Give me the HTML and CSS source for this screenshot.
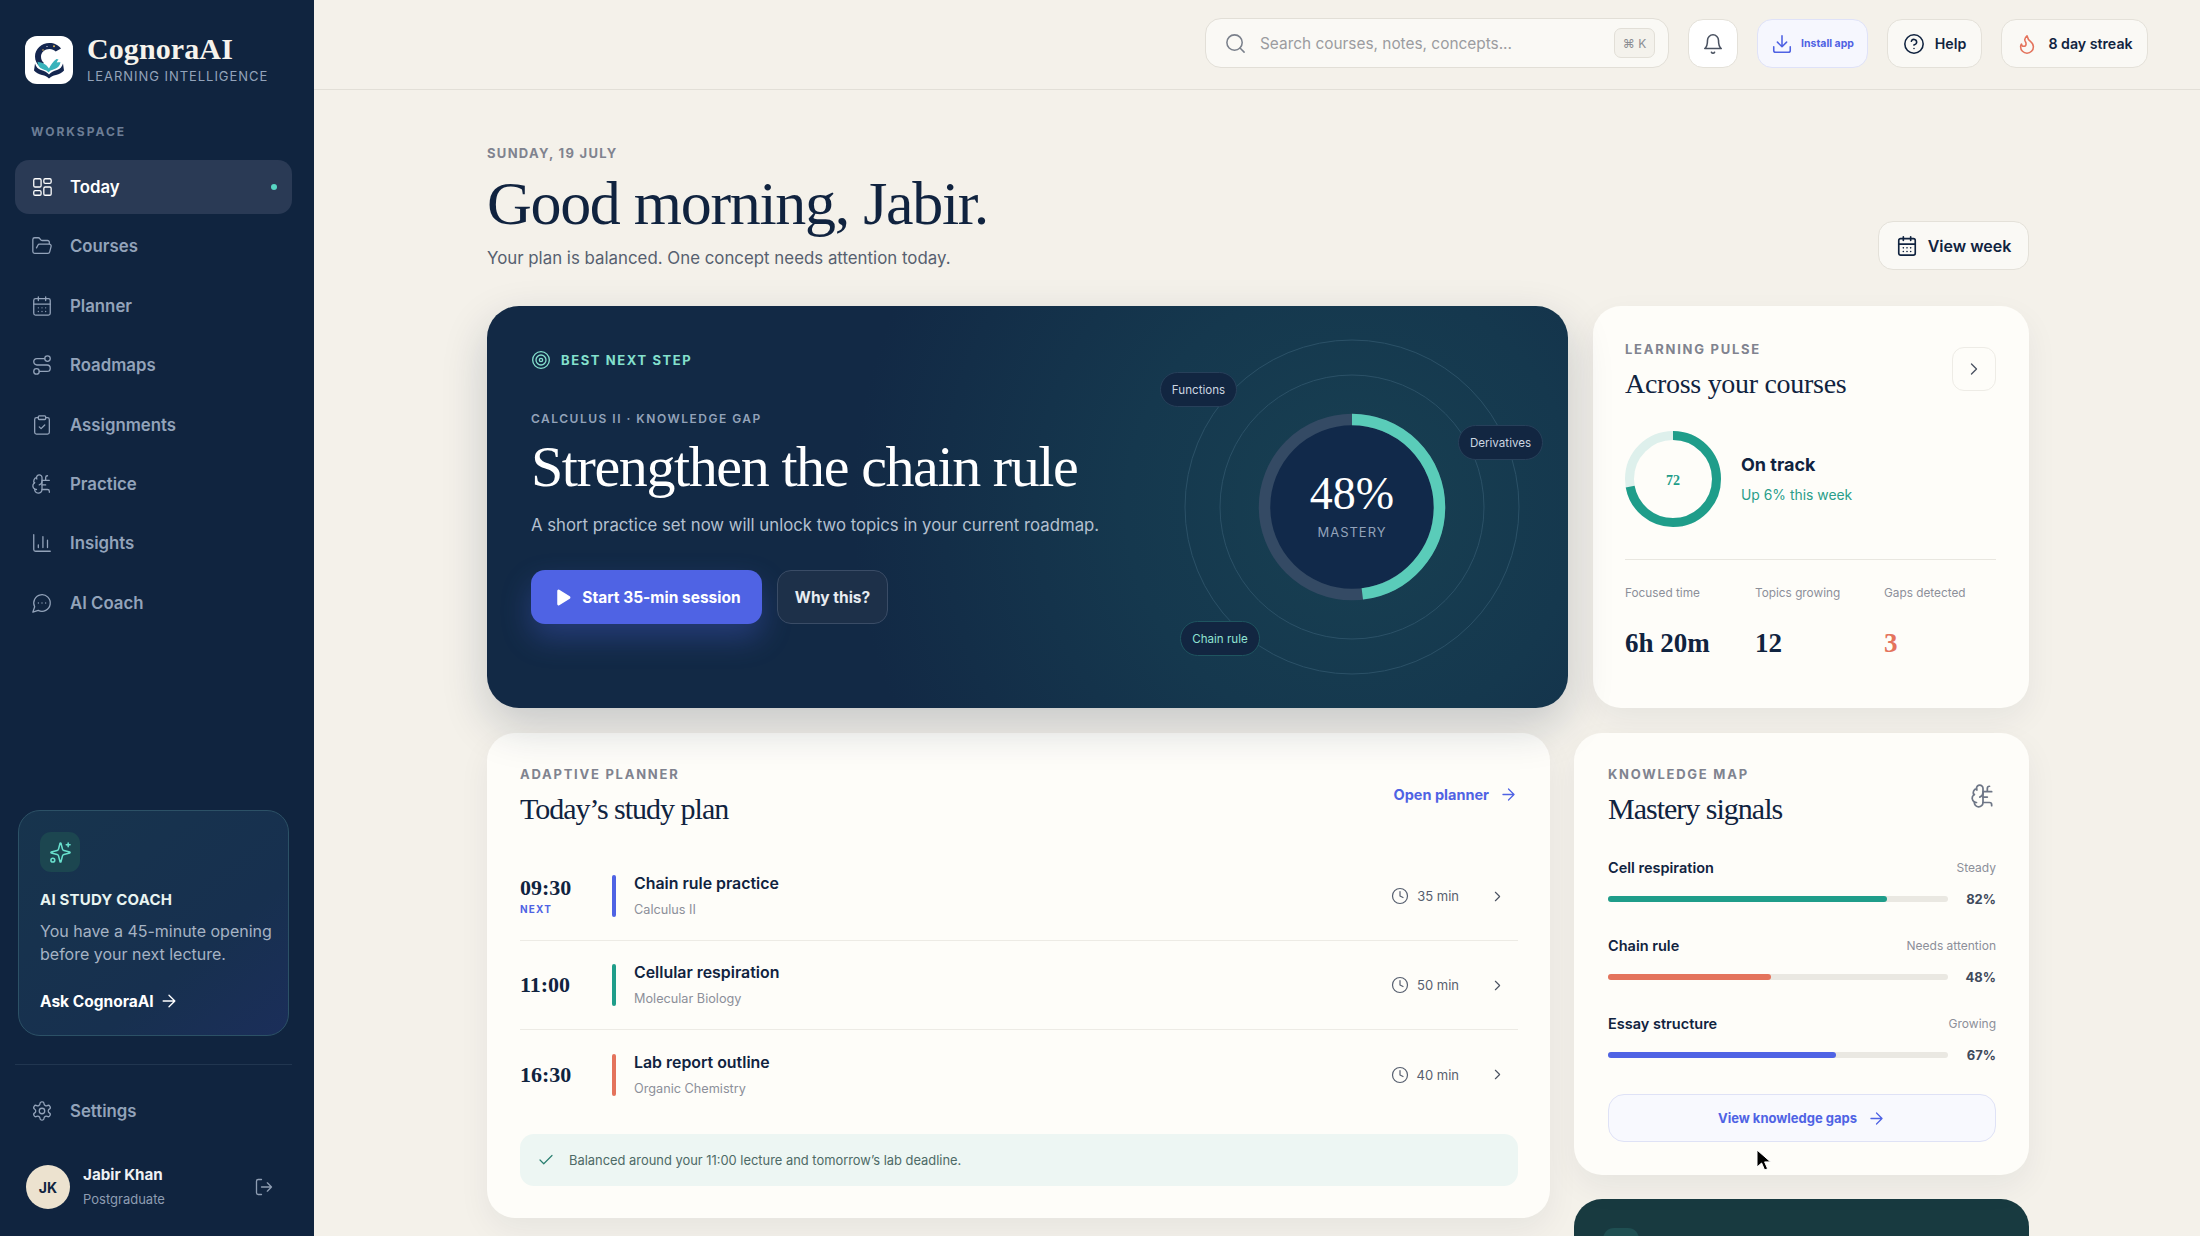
FILE: index.html
```html
<!DOCTYPE html>
<html lang="en">
  <head>
    <meta charset="UTF-8" />
    <meta name="viewport" content="width=device-width, initial-scale=1.0" />
    <title>CognoraAI</title>
    <link rel="stylesheet" href="styles.css">
  </head>
  <body>
    <svg class="icon-defs" aria-hidden="true">
      <symbol id="i-grid" viewBox="0 0 24 24"><rect x="3" y="3" width="8" height="9" rx="1.5"/><rect x="14" y="3" width="8" height="5" rx="1.5"/><rect x="14" y="12" width="8" height="9" rx="1.5"/><rect x="3" y="16" width="8" height="5" rx="1.5"/></symbol>
      <symbol id="i-folder" viewBox="0 0 24 24"><path d="m6 14 1.5-2.9A2 2 0 0 1 9.24 10H20a2 2 0 0 1 1.94 2.5l-1.54 6a2 2 0 0 1-1.95 1.5H4a2 2 0 0 1-2-2V5a2 2 0 0 1 2-2h3.9a2 2 0 0 1 1.69.9l.81 1.2a2 2 0 0 0 1.67.9H18a2 2 0 0 1 2 2v2"/></symbol>
      <symbol id="i-calendar" viewBox="0 0 24 24"><rect x="3" y="4" width="18" height="18" rx="2"/><path d="M16 2v4M8 2v4M3 10h18M8 14h.01M12 14h.01M16 14h.01M8 18h.01M12 18h.01M16 18h.01"/></symbol>
      <symbol id="i-route" viewBox="0 0 24 24"><circle cx="6" cy="19" r="3"/><path d="M9 19h8.5a3.5 3.5 0 0 0 0-7h-11a3.5 3.5 0 0 1 0-7H15"/><circle cx="18" cy="5" r="3"/></symbol>
      <symbol id="i-clipboard" viewBox="0 0 24 24"><rect x="8" y="2" width="8" height="4" rx="1"/><path d="M16 4h2a2 2 0 0 1 2 2v14a2 2 0 0 1-2 2H6a2 2 0 0 1-2-2V6a2 2 0 0 1 2-2h2"/><path d="m9 14 2 2 4-4"/></symbol>
      <symbol id="i-brain" viewBox="0 0 24 24"><path d="M12 5a3 3 0 1 0-5.997.125 4 4 0 0 0-2.526 5.77 4 4 0 0 0 .556 6.588A4 4 0 1 0 12 18Z"/><path d="M9 13a4.5 4.5 0 0 0 3-4M6.003 5.125A3 3 0 0 0 6.401 6.5M3.477 10.896a4 4 0 0 1 .585-.396M6 18a4 4 0 0 1-1.967-.516"/><path d="M12 13h4M12 18h6a2 2 0 0 1 2 2v1M12 8h8M16 8V5a2 2 0 0 1 2-2"/></symbol>
      <symbol id="i-chart" viewBox="0 0 24 24"><path d="M3 3v16a2 2 0 0 0 2 2h16M18 17V9M13 17V5M8 17v-3"/></symbol>
      <symbol id="i-chat" viewBox="0 0 24 24"><path d="M7.9 20A9 9 0 1 0 4 16.1L2 22Z"/><path d="M8 12h.01M12 12h.01M16 12h.01"/></symbol>
      <symbol id="i-settings" viewBox="0 0 24 24"><path d="M12.22 2h-.44a2 2 0 0 0-2 2v.18a2 2 0 0 1-1 1.73l-.43.25a2 2 0 0 1-2 0l-.15-.08a2 2 0 0 0-2.73.73l-.22.38a2 2 0 0 0 .73 2.73l.15.1a2 2 0 0 1 1 1.72v.51a2 2 0 0 1-1 1.74l-.15.09a2 2 0 0 0-.73 2.73l.22.38a2 2 0 0 0 2.73.73l.15-.08a2 2 0 0 1 2 0l.43.25a2 2 0 0 1 1 1.73V20a2 2 0 0 0 2 2h.44a2 2 0 0 0 2-2v-.18a2 2 0 0 1 1-1.73l.43-.25a2 2 0 0 1 2 0l.15.08a2 2 0 0 0 2.73-.73l.22-.39a2 2 0 0 0-.73-2.73l-.15-.08a2 2 0 0 1-1-1.74v-.5a2 2 0 0 1 1-1.74l.15-.09a2 2 0 0 0 .73-2.73l-.22-.38a2 2 0 0 0-2.73-.73l-.15.08a2 2 0 0 1-2 0l-.43-.25a2 2 0 0 1-1-1.73V4a2 2 0 0 0-2-2z"/><circle cx="12" cy="12" r="3"/></symbol>
      <symbol id="i-logout" viewBox="0 0 24 24"><path d="M9 21H5a2 2 0 0 1-2-2V5a2 2 0 0 1 2-2h4M16 17l5-5-5-5M21 12H9"/></symbol>
      <symbol id="i-sparkle" viewBox="0 0 24 24"><path d="M9.937 15.5A2 2 0 0 0 8.5 14.063l-6.135-1.582a.5.5 0 0 1 0-.962L8.5 9.936A2 2 0 0 0 9.937 8.5l1.582-6.135a.5.5 0 0 1 .963 0L14.063 8.5A2 2 0 0 0 15.5 9.937l6.135 1.581a.5.5 0 0 1 0 .964L15.5 14.063a2 2 0 0 0-1.437 1.437l-1.582 6.135a.5.5 0 0 1-.963 0z"/><path d="M20 2v4M22 4h-4"/><circle cx="4" cy="20" r="2"/></symbol>
      <symbol id="i-arrow" viewBox="0 0 24 24"><path d="M5 12h14M12 5l7 7-7 7"/></symbol>
      <symbol id="i-chevron" viewBox="0 0 24 24"><path d="m9 18 6-6-6-6"/></symbol>
      <symbol id="i-clock" viewBox="0 0 24 24"><circle cx="12" cy="12" r="10"/><path d="M12 6v6l4 2"/></symbol>
      <symbol id="i-search" viewBox="0 0 24 24"><circle cx="11" cy="11" r="8"/><path d="m21 21-4.3-4.3"/></symbol>
      <symbol id="i-bell" viewBox="0 0 24 24"><path d="M6 8a6 6 0 0 1 12 0c0 7 3 9 3 9H3s3-2 3-9M10.3 21a1.94 1.94 0 0 0 3.4 0"/></symbol>
      <symbol id="i-download" viewBox="0 0 24 24"><path d="M21 15v4a2 2 0 0 1-2 2H5a2 2 0 0 1-2-2v-4M7 10l5 5 5-5M12 15V3"/></symbol>
      <symbol id="i-help" viewBox="0 0 24 24"><circle cx="12" cy="12" r="10"/><path d="M9.09 9a3 3 0 0 1 5.83 1c0 2-3 3-3 3M12 17h.01"/></symbol>
      <symbol id="i-flame" viewBox="0 0 24 24"><path d="M8.5 14.5A2.5 2.5 0 0 0 11 12c0-1.38-.5-2-1-3-1.072-2.143-.224-4.054 2-6 .5 2.5 2 4.9 4 6.5 2 1.6 3 3.5 3 5.5a7 7 0 1 1-14 0c0-1.153.433-2.294 1-3a2.5 2.5 0 0 0 2.5 2.5z"/></symbol>
      <symbol id="i-target" viewBox="0 0 24 24"><circle cx="12" cy="12" r="10"/><circle cx="12" cy="12" r="6"/><circle cx="12" cy="12" r="2"/></symbol>
      <symbol id="i-check" viewBox="0 0 24 24"><path d="M20 6 9 17l-5-5"/></symbol>
    </svg>

    <div class="app">
      <aside class="sidebar">
        <div class="brand">
          <div class="brand-logo">
            <svg width="38" height="38" viewBox="0 0 38 38">
              <path d="M31 7.500C28.500 4 24 2 19.500 2 11.500 2 5 8.300 5 15.500c0 4 1.800 7.500 4.800 10L14 22c-2-1.500-3-3.800-3-6.300C11 11.300 14.800 8 19.500 8c2.500 0 4.600.9 6.200 2.500Z" fill="#14264f"/>
              <path d="M5 22.500c1 3.500 3 5.500 6 6.500 3.500 1 6 2 8 4.500 2-2.500 4.500-3.500 8-4.500 3-1 5-3 6-6.500l1 7c-2 2.500-4.500 3.500-8 4.500-3 .8-5 1.600-7 3.500-2-1.900-4-2.700-7-3.500-3.500-1-6-2-8-4.500Z" fill="#14264f"/>
              <path d="M8.500 21c3.500.2 7.500 2 10.500 6.500 1.500-3.500 4-7 7.500-9.500l2 .5c-1 1-1.500 2-1.800 3 1.500-.3 2.800-.4 3.800-.2-.5 3.700-3 6-6.500 7-2.800.8-4.500 1.700-5.500 3.200-1-1.500-3-2.400-5.500-3.200-3-1-5-3-5.500-7.800Z" fill="#38b3bb"/>
              <circle cx="24" cy="5.300" r="1" fill="#e8bb55"/>
              <circle cx="13" cy="9" r="0.8" fill="#e8bb55"/>
              <circle cx="17" cy="5.500" r="0.6" fill="#fff"/>
            </svg>
          </div>
          <div>
            <div class="brand-name">CognoraAI</div>
            <div class="brand-sub">LEARNING INTELLIGENCE</div>
          </div>
        </div>

        <div class="nav-title">WORKSPACE</div>
        <nav class="nav">
          <a class="nav-item active"><svg class="icon"><use href="#i-grid"/></svg>Today<span class="nav-dot"></span></a>
          <a class="nav-item"><svg class="icon"><use href="#i-folder"/></svg>Courses</a>
          <a class="nav-item"><svg class="icon"><use href="#i-calendar"/></svg>Planner</a>
          <a class="nav-item"><svg class="icon"><use href="#i-route"/></svg>Roadmaps</a>
          <a class="nav-item"><svg class="icon"><use href="#i-clipboard"/></svg>Assignments</a>
          <a class="nav-item"><svg class="icon"><use href="#i-brain"/></svg>Practice</a>
          <a class="nav-item"><svg class="icon"><use href="#i-chart"/></svg>Insights</a>
          <a class="nav-item"><svg class="icon"><use href="#i-chat"/></svg>AI Coach</a>
        </nav>

        <div class="coach">
          <div class="coach-icon"><svg class="icon"><use href="#i-sparkle"/></svg></div>
          <div class="coach-title">AI STUDY COACH</div>
          <p class="coach-text">You have a 45-minute opening before your next lecture.</p>
          <a class="coach-link">Ask CognoraAI <svg class="icon"><use href="#i-arrow"/></svg></a>
        </div>

        <div class="side-foot">
          <a class="nav-item"><svg class="icon"><use href="#i-settings"/></svg>Settings</a>
          <div class="user">
            <div class="avatar">JK</div>
            <div class="user-info">
              <div class="user-name">Jabir Khan</div>
              <div class="user-role">Postgraduate</div>
            </div>
            <svg class="icon user-out"><use href="#i-logout"/></svg>
          </div>
        </div>
      </aside>

      <div class="content">
        <header class="topbar">
          <div class="search">
            <svg class="icon"><use href="#i-search"/></svg>
            <span class="search-text">Search courses, notes, concepts...</span>
            <span class="kbd">⌘ K</span>
          </div>
          <button class="top-btn bell"><svg class="icon"><use href="#i-bell"/></svg></button>
          <button class="top-btn install"><svg class="icon"><use href="#i-download"/></svg>Install app</button>
          <button class="top-btn help"><svg class="icon"><use href="#i-help"/></svg>Help</button>
          <button class="top-btn streak"><svg class="icon flame"><use href="#i-flame"/></svg>8 day streak</button>
        </header>

        <main class="page">
          <section class="page-head">
            <div>
              <div class="date">SUNDAY, 19 JULY</div>
              <h1>Good morning, Jabir.</h1>
              <p class="lead">Your plan is balanced. One concept needs attention today.</p>
            </div>
            <button class="week-btn"><svg class="icon"><use href="#i-calendar"/></svg>View week</button>
          </section>

          <section class="row-one">
            <div class="hero">
              <div class="hero-copy">
                <div class="hero-tag"><svg class="icon"><use href="#i-target"/></svg>BEST NEXT STEP</div>
                <div class="hero-kicker">CALCULUS II · KNOWLEDGE GAP</div>
                <h2>Strengthen the chain rule</h2>
                <p class="hero-text">A short practice set now will unlock two topics in your current roadmap.</p>
                <div class="hero-actions">
                  <button class="btn-start"><svg viewBox="0 0 24 24" width="21" height="21"><path d="M6 4.500v15a1.500 1.500 0 0 0 2.300 1.300l12-7.500a1.500 1.500 0 0 0 0-2.600l-12-7.500A1.500 1.500 0 0 0 6 4.500z" fill="#fff"/></svg>Start 35-min session</button>
                  <button class="btn-why">Why this?</button>
                </div>
              </div>
              <div class="orbit">
                <svg width="400" height="402" viewBox="0 0 400 402">
                  <circle cx="200" cy="201" r="167" class="orbit-line"/>
                  <circle cx="200" cy="201" r="132" class="orbit-line"/>
                  <circle cx="200" cy="201" r="88" class="orbit-disc"/>
                  <circle cx="200" cy="201" r="87.5" class="orbit-track"/>
                  <circle cx="200" cy="201" r="87.5" class="orbit-fill" stroke-dasharray="264 550" transform="rotate(-90 200 201)"/>
                </svg>
                <div class="orbit-center">
                  <div class="orbit-num">48%</div>
                  <div class="orbit-label">MASTERY</div>
                </div>
                <span class="pill pill-fn">Functions</span>
                <span class="pill pill-de">Derivatives</span>
                <span class="pill pill-ch">Chain rule</span>
              </div>
            </div>

            <div class="card pulse">
              <div class="card-head">
                <div>
                  <div class="eyebrow">LEARNING PULSE</div>
                  <h3 class="pulse-title">Across your courses</h3>
                </div>
                <button class="square-btn"><svg class="icon"><use href="#i-chevron"/></svg></button>
              </div>
              <div class="pulse-main">
                <div class="pulse-ring">
                  <svg width="96" height="96" viewBox="0 0 96 96">
                    <circle cx="48" cy="48" r="43.5" class="ring-track"/>
                    <circle cx="48" cy="48" r="43.5" class="ring-fill" stroke-dasharray="197 274" transform="rotate(-90 48 48)"/>
                  </svg>
                  <span class="pulse-num">72</span>
                </div>
                <div>
                  <div class="pulse-state">On track</div>
                  <div class="pulse-delta">Up 6% this week</div>
                </div>
              </div>
              <div class="stats">
                <div><div class="stat-label">Focused time</div><div class="stat-value">6h 20m</div></div>
                <div><div class="stat-label">Topics growing</div><div class="stat-value">12</div></div>
                <div><div class="stat-label">Gaps detected</div><div class="stat-value coral">3</div></div>
              </div>
            </div>
          </section>

          <section class="row-two">
            <div class="card plan">
              <div class="card-head">
                <div>
                  <div class="eyebrow">ADAPTIVE PLANNER</div>
                  <h3>Today’s study plan</h3>
                </div>
                <a class="open-link">Open planner <svg class="icon"><use href="#i-arrow"/></svg></a>
              </div>
              <div class="sessions">
                <div class="session">
                  <div class="session-time">09:30<span class="next">NEXT</span></div>
                  <span class="session-bar indigo"></span>
                  <div class="session-info">
                    <div class="session-name">Chain rule practice</div>
                    <div class="session-course">Calculus II</div>
                  </div>
                  <div class="session-mins"><svg class="icon"><use href="#i-clock"/></svg>35 min</div>
                  <svg class="icon session-go"><use href="#i-chevron"/></svg>
                </div>
                <div class="session">
                  <div class="session-time">11:00</div>
                  <span class="session-bar teal"></span>
                  <div class="session-info">
                    <div class="session-name">Cellular respiration</div>
                    <div class="session-course">Molecular Biology</div>
                  </div>
                  <div class="session-mins"><svg class="icon"><use href="#i-clock"/></svg>50 min</div>
                  <svg class="icon session-go"><use href="#i-chevron"/></svg>
                </div>
                <div class="session">
                  <div class="session-time">16:30</div>
                  <span class="session-bar coral-bg"></span>
                  <div class="session-info">
                    <div class="session-name">Lab report outline</div>
                    <div class="session-course">Organic Chemistry</div>
                  </div>
                  <div class="session-mins"><svg class="icon"><use href="#i-clock"/></svg>40 min</div>
                  <svg class="icon session-go"><use href="#i-chevron"/></svg>
                </div>
              </div>
              <div class="plan-note"><svg class="icon"><use href="#i-check"/></svg>Balanced around your 11:00 lecture and tomorrow’s lab deadline.</div>
            </div>

            <div class="side-stack">
              <div class="card mastery">
                <div class="card-head">
                  <div>
                    <div class="eyebrow">KNOWLEDGE MAP</div>
                    <h3>Mastery signals</h3>
                  </div>
                  <svg class="icon mastery-icon"><use href="#i-brain"/></svg>
                </div>
                <div class="signals">
                  <div class="signal">
                    <div class="signal-top"><span class="signal-name">Cell respiration</span><span class="signal-note">Steady</span></div>
                    <div class="signal-bottom">
                      <div class="track"><div class="track-fill teal" style="width: 82%"></div></div>
                      <span class="signal-pct">82%</span>
                    </div>
                  </div>
                  <div class="signal">
                    <div class="signal-top"><span class="signal-name">Chain rule</span><span class="signal-note">Needs attention</span></div>
                    <div class="signal-bottom">
                      <div class="track"><div class="track-fill coral-bg" style="width: 48%"></div></div>
                      <span class="signal-pct">48%</span>
                    </div>
                  </div>
                  <div class="signal">
                    <div class="signal-top"><span class="signal-name">Essay structure</span><span class="signal-note">Growing</span></div>
                    <div class="signal-bottom">
                      <div class="track"><div class="track-fill indigo" style="width: 67%"></div></div>
                      <span class="signal-pct">67%</span>
                    </div>
                  </div>
                </div>
                <button class="gaps-btn">View knowledge gaps <svg class="icon"><use href="#i-arrow"/></svg></button>
                <svg class="cursor" width="16" height="24" viewBox="0 0 16 24"><path d="M1 1v17l4.600-4 3 7 3-1.300-3-6.800h6z" fill="#000" stroke="#fff" stroke-width="1"/></svg>
              </div>
              <div class="dark-card"><div class="dark-icon"></div></div>
            </div>
          </section>
        </main>
      </div>
    </div>
  </body>
</html>
```

FILE: styles.css
```css
/* styles.css */
* {
  box-sizing: border-box;
}

html,
body {
  height: 100%;
  margin: 0;
  overflow: hidden;
}

body {
  font-family: Inter, "Noto Sans", sans-serif;
  background-color: #f4f1ea;
  color: #10233f;
}

button {
  font-family: inherit;
  cursor: pointer;
}

h1,
h2,
h3,
p {
  margin: 0;
}

.icon-defs {
  position: absolute;
  width: 0;
  height: 0;
}

.icon {
  width: 20px;
  height: 20px;
  fill: none;
  stroke: currentColor;
  stroke-width: 1.6;
  stroke-linecap: round;
  stroke-linejoin: round;
  flex: none;
}

.app {
  display: flex;
  height: 1236px;
  overflow: hidden;
}

/* sidebar */
.sidebar {
  width: 314px;
  flex: none;
  display: flex;
  flex-direction: column;
  padding: 36px 22px 27px 15px;
  background-color: #10243f;
  color: #93a3ba;
}

.brand {
  display: flex;
  align-items: center;
  gap: 14px;
  padding-left: 10px;
}

.brand-logo {
  width: 48px;
  height: 48px;
  border-radius: 12px;
  background-color: #fff;
  display: flex;
  align-items: center;
  justify-content: center;
}

.brand-name {
  font-family: "Liberation Serif", serif;
  font-size: 30px;
  font-weight: 700;
  line-height: 30px;
  letter-spacing: 0.1px;
  color: #f6f3ec;
  margin-top: -3px;
}

.brand-sub {
  margin-top: 4px;
  font-size: 13px;
  letter-spacing: 0.95px;
  line-height: 16px;
  color: #93a3ba;
}

.nav-title {
  margin: 40px 0 0 16px;
  font-size: 12px;
  font-weight: 700;
  letter-spacing: 2px;
  line-height: 16px;
  color: #6c7d95;
}

.nav {
  display: flex;
  flex-direction: column;
  gap: 5.4px;
  margin-top: 20px;
}

.nav-item {
  height: 54px;
  display: flex;
  align-items: center;
  gap: 17px;
  padding-left: 16px;
  border-radius: 14px;
  font-size: 16.8px;
  font-weight: 600;
  color: #93a3ba;
}

.nav-item .icon {
  width: 22px;
  height: 22px;
  stroke-width: 1.4;
}

.nav-item.active {
  background-color: #2a3a55;
  color: #fff;
  position: relative;
}

.nav-dot {
  width: 6px;
  height: 6px;
  margin-left: auto;
  margin-right: 15px;
  border-radius: 50%;
  background-color: #58d6c4;
}

.coach {
  margin: auto 3px 0 3px;
  height: 226px;
  padding: 21px 10px 0 21px;
  border: 1px solid #2c5166;
  border-radius: 22px;
  background: linear-gradient(140deg, #17344d 0%, #17304f 65%, #1b2e5a 100%);
}

.coach-icon {
  width: 40px;
  height: 40px;
  border-radius: 11px;
  background-color: #1c4650;
  color: #69e0cd;
  display: flex;
  align-items: center;
  justify-content: center;
}

.coach-icon .icon {
  width: 23px;
  height: 23px;
}

.coach-title {
  margin-top: 18px;
  font-size: 15px;
  font-weight: 700;
  letter-spacing: 0.2px;
  line-height: 20px;
  color: #e8f4f1;
}

.coach-text {
  margin-top: 10px;
  font-size: 16px;
  line-height: 23px;
  color: #a6b3c4;
}

.coach-link {
  display: flex;
  align-items: center;
  gap: 5px;
  margin-top: 25px;
  font-size: 15.5px;
  font-weight: 700;
  color: #fff;
}

.side-foot {
  margin-top: 28px;
  padding-top: 19px;
  border-top: 1px solid #213650;
}

.user {
  display: flex;
  align-items: center;
  margin-top: 27px;
  padding-left: 11px;
}

.avatar {
  width: 44px;
  height: 44px;
  border-radius: 50%;
  background-color: #ece2cf;
  color: #10243f;
  font-size: 14px;
  font-weight: 700;
  display: flex;
  align-items: center;
  justify-content: center;
}

.user-info {
  margin-left: 13px;
}

.user-name {
  font-size: 15.2px;
  font-weight: 700;
  line-height: 22px;
  margin-top: -2px;
  color: #eef1f4;
}

.user-role {
  margin-top: 4px;
  font-size: 13px;
  line-height: 18px;
  color: #8e9db2;
}

.user-out {
  margin-left: auto;
  margin-right: 18px;
  color: #8e9db2;
}

/* top bar */
.content {
  flex: 1;
  min-width: 0;
}

.topbar {
  height: 90px;
  display: flex;
  align-items: flex-start;
  justify-content: flex-end;
  gap: 19px;
  padding: 18px 52px 0 0;
  border-bottom: 1px solid #e2dfd7;
}

.search {
  width: 464px;
  height: 50px;
  display: flex;
  align-items: center;
  padding: 0 13px 0 18px;
  border: 1px solid #e2dfd7;
  border-radius: 16px;
  background-color: #faf9f5;
  color: #7a808b;
}

.search .icon {
  width: 23px;
  height: 23px;
}

.search-text {
  margin-left: 13px;
  font-size: 15.4px;
  color: #9b9ca0;
}

.kbd {
  margin-left: auto;
  width: 41px;
  height: 30px;
  border: 1px solid #e2dfd7;
  border-radius: 7px;
  background-color: #f4f2ec;
  font-size: 12px;
  color: #8b8d92;
  display: flex;
  align-items: center;
  justify-content: center;
}

.top-btn {
  height: 49px;
  margin-top: 1px;
  display: flex;
  align-items: center;
  justify-content: center;
  gap: 10px;
  padding: 0;
  border: 1px solid #e4e1d9;
  border-radius: 15px;
  background-color: #faf9f5;
  font-size: 14.2px;
  font-weight: 600;
  color: #10233f;
}

.top-btn .icon {
  width: 22px;
  height: 22px;
  stroke-width: 1.7;
}

.top-btn.bell {
  width: 50px;
  background-color: #fff;
  color: #4a5261;
}

.top-btn.install {
  width: 111px;
  gap: 8px;
  border-color: #dfe2f8;
  background-color: #f6f7fe;
  font-size: 10.5px;
  font-weight: 700;
  color: #4f62e3;
}

.top-btn.help {
  width: 95px;
}

.top-btn.streak {
  width: 147px;
}

.top-btn .flame {
  color: #e4735c;
}

/* page */
.page {
  padding: 0 171px 0 173px;
}

.page-head {
  display: flex;
  justify-content: space-between;
  align-items: flex-end;
  padding-top: 55px;
}

.date {
  font-size: 13px;
  font-weight: 700;
  letter-spacing: 1.3px;
  line-height: 16px;
  color: #80838f;
}

h1 {
  margin-top: 12px;
  font-family: "Liberation Serif", serif;
  font-size: 62px;
  font-weight: 400;
  line-height: 60px;
  letter-spacing: -1.3px;
  color: #10233f;
}

.lead {
  margin-top: 13px;
  font-size: 16.85px;
  line-height: 24px;
  color: #565f6f;
}

.week-btn {
  width: 151px;
  height: 49px;
  display: flex;
  align-items: center;
  justify-content: center;
  gap: 10px;
  border: 1px solid #e4e1d9;
  border-radius: 15px;
  background-color: #faf9f5;
  font-size: 16px;
  font-weight: 600;
  color: #10233f;
}

.week-btn .icon {
  width: 22px;
  height: 22px;
  stroke-width: 1.8;
}

.row-one {
  display: grid;
  grid-template-columns: 1081px 436px;
  gap: 25px;
  margin-top: 36px;
}

.row-two {
  display: grid;
  grid-template-columns: 1063px 455px;
  gap: 24px;
  margin-top: 25px;
  align-items: start;
}

/* hero */
.hero {
  position: relative;
  z-index: 1;
  height: 402px;
  display: flex;
  justify-content: space-between;
  padding: 44px 16px 0 44px;
  border-radius: 32px;
  background: radial-gradient(circle 500px at 865px 201px, #184052 0%, #15384e 45%, #122945 100%), #122945;
  box-shadow: 0 18px 46px rgba(16, 36, 63, 0.2);
  color: #fff;
}

.hero-tag {
  display: flex;
  align-items: center;
  gap: 10px;
  height: 20px;
  font-size: 13px;
  font-weight: 700;
  letter-spacing: 1.6px;
  color: #84e0cd;
}

.hero-kicker {
  margin-top: 41px;
  font-size: 12px;
  font-weight: 600;
  letter-spacing: 1.5px;
  line-height: 16px;
  color: #93a3ba;
}

.hero h2 {
  margin-top: 10px;
  font-family: "Liberation Serif", serif;
  font-size: 58px;
  font-weight: 400;
  line-height: 60px;
  letter-spacing: -1.4px;
  white-space: nowrap;
}

.hero-text {
  margin-top: 15px;
  font-size: 16.75px;
  line-height: 26px;
  color: #b4c0d0;
  white-space: nowrap;
}

.hero-actions {
  display: flex;
  gap: 15px;
  margin-top: 32px;
}

.btn-start {
  width: 231px;
  height: 54px;
  display: flex;
  align-items: center;
  justify-content: center;
  gap: 9px;
  border: none;
  border-radius: 14px;
  background-color: #4f63e4;
  box-shadow: 0 14px 30px rgba(79, 99, 228, 0.32);
  font-size: 15.5px;
  font-weight: 700;
  color: #fff;
}

.btn-why {
  width: 111px;
  height: 54px;
  border: 1px solid #3a4c66;
  border-radius: 14px;
  background-color: #1d3049;
  font-size: 15.5px;
  font-weight: 700;
  color: #e8ecf1;
}

.orbit {
  position: relative;
  width: 400px;
  height: 402px;
  margin-top: -44px;
  flex: none;
}

.orbit svg {
  display: block;
}

.orbit-line {
  fill: none;
  stroke: #2b5167;
  stroke-width: 1;
}

.orbit-disc {
  fill: #11294a;
}

.orbit-track {
  fill: none;
  stroke: #344a64;
  stroke-width: 11.5;
}

.orbit-fill {
  fill: none;
  stroke: #5accb9;
  stroke-width: 11.5;
}

.orbit-center {
  position: absolute;
  top: 160px;
  left: 0;
  width: 400px;
  text-align: center;
}

.orbit-num {
  font-family: "Liberation Serif", serif;
  font-size: 46px;
  line-height: 56px;
}

.orbit-label {
  margin-top: 1px;
  font-size: 13px;
  letter-spacing: 1px;
  line-height: 18px;
  color: #93a3ba;
}

.pill {
  position: absolute;
  height: 35px;
  display: flex;
  align-items: center;
  justify-content: center;
  border: 1px solid #27405a;
  border-radius: 18px;
  background-color: #122641;
  font-size: 11.6px;
  color: #ccd5e0;
}

.pill-fn {
  left: 8px;
  top: 66px;
  width: 77px;
}

.pill-de {
  left: 306px;
  top: 119px;
  width: 85px;
}

.pill-ch {
  left: 28px;
  top: 315px;
  width: 80px;
  border-color: #1f5560;
  color: #8fe3d2;
}

/* cards */
.card {
  position: relative;
  border-radius: 28px;
  background-color: #fefdf9;
  box-shadow: 0 12px 32px rgba(16, 36, 63, 0.06);
}

.card-head {
  display: flex;
  justify-content: space-between;
  align-items: flex-start;
}

.eyebrow {
  font-size: 13px;
  font-weight: 700;
  letter-spacing: 1.75px;
  line-height: 16px;
  color: #80838f;
}

.card h3 {
  margin-top: 9px;
  font-family: "Liberation Serif", serif;
  font-size: 30px;
  font-weight: 400;
  line-height: 36px;
  letter-spacing: -1px;
  color: #10233f;
}

.card .pulse-title {
  margin-top: 10px;
  font-size: 28px;
  line-height: 34px;
  letter-spacing: -0.3px;
}

.pulse {
  height: 402px;
  padding: 35px 33px 0 32px;
}

.square-btn {
  width: 44px;
  height: 44px;
  margin-top: 6px;
  padding: 0;
  border: 1px solid #eeece6;
  border-radius: 12px;
  background-color: #fefdf9;
  color: #4a5261;
  display: flex;
  align-items: center;
  justify-content: center;
}

.pulse-main {
  display: flex;
  align-items: center;
  gap: 20px;
  margin-top: 30px;
}

.pulse-ring {
  position: relative;
  width: 96px;
  height: 96px;
}

.pulse-ring svg {
  display: block;
}

.ring-track {
  fill: none;
  stroke: #def0ec;
  stroke-width: 9;
}

.ring-fill {
  fill: none;
  stroke: #1f9d8a;
  stroke-width: 9;
}

.pulse-num {
  position: absolute;
  top: 2px;
  left: 0;
  width: 96px;
  line-height: 96px;
  text-align: center;
  font-family: "Liberation Serif", serif;
  font-size: 14px;
  font-weight: 700;
  color: #1f9d8a;
}

.pulse-state {
  font-size: 18px;
  font-weight: 700;
  line-height: 24px;
  color: #10233f;
}

.pulse-delta {
  margin-top: 8px;
  font-size: 13.9px;
  line-height: 20px;
  color: #2a9d8a;
}

.stats {
  display: grid;
  grid-template-columns: 130px 129px 1fr;
  margin-top: 32px;
  padding-top: 26px;
  border-top: 1px solid #e9e7e0;
}

.stat-label {
  font-size: 11.8px;
  line-height: 14px;
  color: #8c8f99;
}

.stat-value {
  margin-top: 28px;
  font-family: "Liberation Serif", serif;
  font-size: 27px;
  font-weight: 700;
  line-height: 30px;
  color: #10233f;
}

.coral {
  color: #e4735c;
}

/* planner */
.plan {
  height: 485px;
  padding: 33px 32px 0 33px;
}

.open-link {
  display: flex;
  align-items: center;
  gap: 10px;
  margin-top: 19px;
  font-size: 14.5px;
  font-weight: 700;
  color: #4f63e4;
}

.open-link .icon {
  width: 19px;
  height: 19px;
}

.sessions {
  margin-top: 25px;
}

.session {
  height: 89px;
  display: flex;
  align-items: center;
  padding-right: 12px;
  border-bottom: 1px solid #edebe5;
}

.session:last-child {
  border-bottom: none;
}

.session-time {
  width: 92px;
  font-family: "Liberation Serif", serif;
  font-size: 22px;
  font-weight: 700;
  line-height: 24px;
  color: #10233f;
}

.next {
  display: block;
  margin-top: 2px;
  font-family: Inter, sans-serif;
  font-size: 10px;
  letter-spacing: 1.2px;
  line-height: 14px;
  color: #4f63e4;
}

.session-bar {
  width: 4px;
  height: 42px;
  border-radius: 2px;
}

.indigo {
  background-color: #4f63e4;
}

.teal {
  background-color: #1f9d8a;
}

.coral-bg {
  background-color: #e4735c;
}

.session-info {
  flex: 1;
  margin-left: 18px;
}

.session-name {
  font-size: 15.9px;
  font-weight: 600;
  line-height: 22px;
  color: #10233f;
}

.session-course {
  margin-top: 6px;
  font-size: 12.7px;
  line-height: 18px;
  color: #8c8f99;
}

.session-mins {
  display: flex;
  align-items: center;
  gap: 8px;
  margin-right: 30px;
  font-size: 13px;
  color: #565f6f;
}

.session-mins .icon {
  width: 18px;
  height: 18px;
}

.session-go {
  width: 17px;
  height: 17px;
  color: #4a5261;
}

.plan-note {
  height: 52px;
  display: flex;
  align-items: center;
  gap: 14px;
  margin-top: 15px;
  padding-left: 17px;
  border-radius: 14px;
  background-color: #edf6f3;
  font-size: 12.9px;
  color: #4d6a66;
}

.plan-note .icon {
  width: 18px;
  height: 18px;
  color: #2a7f70;
}

/* mastery */
.side-stack {
  display: flex;
  flex-direction: column;
  gap: 24px;
}

.mastery {
  height: 442px;
  padding: 33px 33px 0 34px;
}

.mastery-icon {
  width: 26px;
  height: 26px;
  margin-top: 17px;
  color: #6e7686;
}

.signals {
  display: flex;
  flex-direction: column;
  gap: 26px;
  margin-top: 30px;
}

.signal-top {
  display: flex;
  justify-content: space-between;
  align-items: center;
  height: 20px;
}

.signal-name {
  font-size: 14.5px;
  font-weight: 600;
  color: #10233f;
}

.signal-note {
  font-size: 12px;
  color: #8c8f99;
}

.signal-bottom {
  display: flex;
  align-items: center;
  justify-content: space-between;
  height: 20px;
  margin-top: 12px;
}

.track {
  width: 340px;
  height: 6px;
  border-radius: 3px;
  background-color: #eae8e2;
}

.track-fill {
  height: 6px;
  border-radius: 3px;
}

.signal-pct {
  font-size: 13px;
  font-weight: 700;
  color: #3f4a5c;
}

.gaps-btn {
  width: 100%;
  height: 48px;
  margin-top: 29px;
  display: flex;
  align-items: center;
  justify-content: center;
  gap: 10px;
  border: 1px solid #dfe2f6;
  border-radius: 16px;
  background-color: #f8f9fe;
  font-size: 13px;
  font-weight: 700;
  color: #4f63e4;
}

.gaps-btn .icon {
  width: 19px;
  height: 19px;
}

.cursor {
  position: absolute;
  left: 182px;
  top: 416px;
}

.dark-card {
  height: 120px;
  padding: 29px;
  border-radius: 28px;
  background-color: #183a40;
}

.dark-icon {
  width: 36px;
  height: 36px;
  border-radius: 11px;
  background-color: #1f4f52;
}
```
